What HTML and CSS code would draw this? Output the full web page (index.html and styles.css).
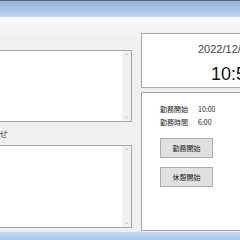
FILE: index.html
```html
<!DOCTYPE html>
<html lang="ja">
<head>
<meta charset="utf-8">
<link rel="stylesheet" href="styles.css">
</head>
<body>
<div class="titlebar"></div>
<div class="main">
  <div class="left">
    <div class="textbox tb1"><div class="scroll"><span class="arr">&#8963;</span><span class="arr">&#8964;</span></div></div>
    <div class="label">お知らせ</div>
    <div class="textbox tb2"><div class="scroll"><span class="arr">&#8963;</span><span class="arr">&#8964;</span></div></div>
  </div>
  <div class="right">
    <div class="clock">
      <div class="date">2022/12/20</div>
      <div class="time">10:55:12</div>
    </div>
    <div class="panel">
      <div class="row"><span class="key">勤務開始</span><span class="val">10:00</span></div>
      <div class="row"><span class="key">勤務時間</span><span class="val">6:00</span></div>
      <div class="btn b1">勤務開始</div>
      <div class="btn b2">休憩開始</div>
    </div>
  </div>
</div>
<div class="taskbar"></div>
</body>
</html>
```
FILE: styles.css
```css
html, body {
  margin: 0;
  padding: 0;
  width: 240px;
  height: 240px;
  overflow: hidden;
  background: #f0f0f0;
  font-family: "Noto Sans CJK JP", "Liberation Sans", sans-serif;
}
.titlebar {
  height: 16px;
  border-top: 1px solid #5b6572;
  background: linear-gradient(to bottom, #98b5de 0%, #a9c3e6 50%, #c3d6ef 100%);
}
.main {
  display: flex;
  height: 214px;
  background: linear-gradient(to bottom, #fbfcfe 0px, #f4f6f8 8px, #f0f0f0 20px);
}
.left {
  flex-shrink: 0;
  margin-left: -41px;
  width: 173px;
  padding-top: 33px;
  display: flex;
  flex-direction: column;
}
.textbox {
  background: #fff;
  border: 1px solid #a7a7a7;
  display: flex;
  justify-content: flex-end;
}
.tb1 { height: 70px; }
.tb2 { height: 81px; }
.scroll {
  width: 9px;
  background: #f0f0f0;
  display: flex;
  flex-direction: column;
  justify-content: space-between;
  align-items: center;
  padding: 2px 0;
}
.arr {
  font-family: "DejaVu Sans", sans-serif;
  font-size: 6px;
  line-height: 6px;
  color: #a0a0a0;
}
.label {
  height: 23px;
  box-sizing: border-box;
  padding-left: 15px;
  font-size: 8.5px;
  line-height: 23px;
  color: #333;
}
.right {
  flex-shrink: 0;
  margin-left: 9px;
  width: 120px;
  padding-top: 16px;
  display: flex;
  flex-direction: column;
  gap: 4px;
}
.clock {
  height: 55px;
  background: #fff;
  border: 1px solid #a7a7a7;
  display: flex;
  flex-direction: column;
  padding-left: 56px;
}
.date {
  font-family: "Liberation Sans", sans-serif;
  font-size: 11px;
  line-height: 12px;
  margin-top: 9px;
  color: #444;
  white-space: nowrap;
}
.time {
  font-family: "Liberation Sans", sans-serif;
  font-size: 18px;
  line-height: 22px;
  margin-top: 8px;
  margin-left: 13px;
  color: #111;
  white-space: nowrap;
}
.panel {
  height: 133px;
  background: #fff;
  border: 1px solid #a7a7a7;
  padding: 10px 0 0 18px;
  display: flex;
  flex-direction: column;
  align-items: flex-start;
}
.row {
  display: flex;
  height: 13px;
  align-items: center;
  font-size: 7px;
  color: #222;
}
.key { width: 38px; }
.btn {
  width: 51px;
  height: 18px;
  border: 1px solid #adadad;
  background: #e1e1e1;
  font-size: 7px;
  color: #222;
  display: flex;
  align-items: center;
  justify-content: center;
}
.b1 { margin-top: 9px; }
.b2 { margin-top: 9px; }
.taskbar {
  height: 9px;
  margin-top: 0;
  border-top: 1px solid #e8eef6;
  background: linear-gradient(to bottom, #c6daf1, #a6c2e7);
}
```
